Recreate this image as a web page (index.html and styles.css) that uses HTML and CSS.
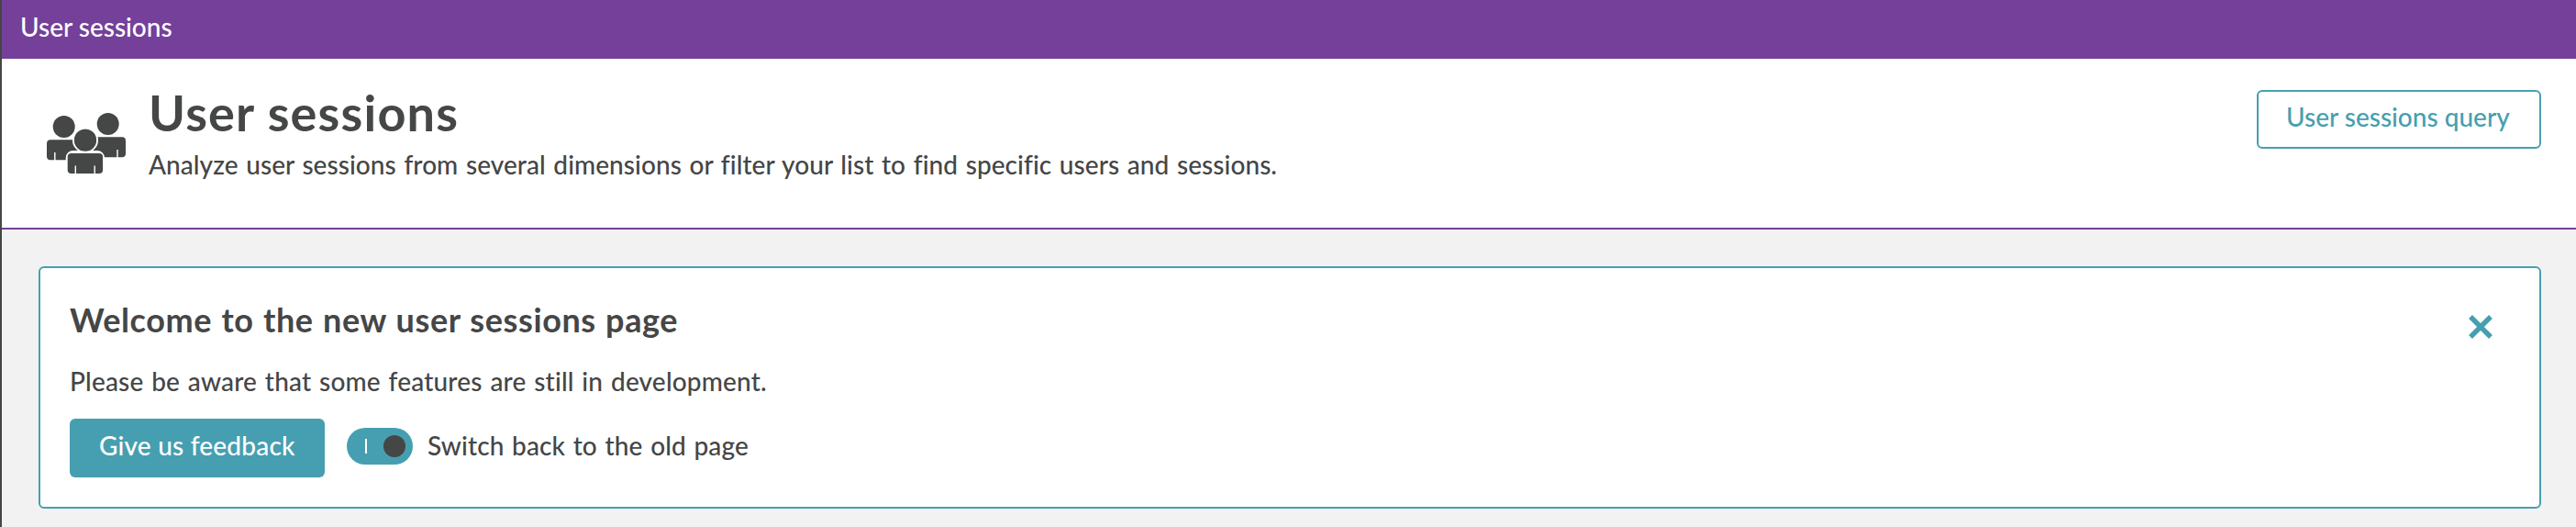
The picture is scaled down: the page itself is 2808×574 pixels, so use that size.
FILE: index.html
```html
<!DOCTYPE html>
<html lang="en">
<head>
    <meta charset="UTF-8">
    <meta name="viewport" content="width=device-width, initial-scale=1.0">
    <title>User sessions</title>
    <link rel="stylesheet" href="styles.css">
</head>
<body>
    <nav class="breadcrumb">User sessions</nav>
    <header class="header">
        <svg class="header-icon" viewBox="0 0 86 68" fill="#454646">
            <circle cx="18.7" cy="16" r="12"/>
            <circle cx="66.7" cy="13" r="12"/>
            <rect x="0" y="30.3" width="40" height="22" rx="4"/>
            <rect x="46" y="27.3" width="40" height="22" rx="4"/>
            <path d="M8.8 44v9M77 41v9" stroke="#fff" stroke-width="1.4"/>
            <circle cx="42" cy="30.7" r="13" stroke="#fff" stroke-width="2"/>
            <path d="M22.7 68V50a6 6 0 0 1 6-6H55a6 6 0 0 1 6 6v18z" fill="#fff" stroke="#fff" stroke-width="4"/>
            <circle cx="42" cy="30.7" r="12"/>
            <rect x="22.7" y="45" width="38.4" height="22" rx="4"/>
            <path d="M31.3 58.5V68M52.2 58.5V68" stroke="#fff" stroke-width="1.4"/>
        </svg>
        <div class="header-text">
            <h1>User sessions</h1>
            <p>Analyze user sessions from several dimensions or filter your list to find specific users and sessions.</p>
        </div>
        <a href="#" class="button query-button">User sessions query</a>
    </header>
    <main class="content">
        <section class="card">
            <div class="card-body">
                <h2>Welcome to the new user sessions page</h2>
                <p>Please be aware that some features are still in development.</p>
                <div class="actions">
                    <a href="#" class="button feedback-button">Give us feedback</a>
                    <span class="toggle"><span class="toggle-line"></span><span class="toggle-knob"></span></span>
                    <span class="toggle-label">Switch back to the old page</span>
                </div>
            </div>
            <svg class="close" viewBox="0 0 26 26" stroke="#469fb0" stroke-width="5.4">
                <path d="M2 2l22 22M24 2L2 24"/>
            </svg>
        </section>
    </main>
</body>
</html>
```
FILE: styles.css
```css
* {
    box-sizing: border-box;
}
body {
    margin: 0;
    min-height: 574px;
    font-family: 'Lato', sans-serif;
    font-size: 28px;
    font-weight: 500;
    color: #454646;
    background-color: #f2f2f2;
    border-left: 2px solid #454646;
}
h1, h2, p {
    margin: 0;
    white-space: nowrap;
}
.breadcrumb {
    height: 64px;
    padding-left: 20px;
    line-height: 58px;
    color: white;
    background-color: #74409a;
}
.header {
    display: flex;
    align-items: flex-start;
    height: 186px;
    padding: 29px 38px 0 49px;
    background-color: white;
    border-bottom: 2px solid #74409a;
}
.header-icon {
    width: 86px;
    height: 68px;
    margin-top: 29px;
}
.header-text {
    margin-left: 25px;
}
.header-text h1 {
    font-size: 54px;
    line-height: 60px;
    letter-spacing: 1.2px;
}
.header-text p {
    margin-top: 6px;
    line-height: 40px;
    letter-spacing: 0.06px;
    word-spacing: 1.5px;
}
.button {
    height: 64px;
    padding: 0 32px;
    line-height: 58px;
    border-radius: 6px;
    text-decoration: none;
    white-space: nowrap;
}
.query-button {
    width: 310px;
    margin: 5px 0 0 auto;
    padding: 0 30px;
    line-height: 54px;
    color: #469fb0;
    border: 2px solid #469fb0;
}
.content {
    padding: 40px 38px 20px 40px;
}
.card {
    display: flex;
    justify-content: space-between;
    height: 264px;
    padding: 34px 51px 0 32px;
    background-color: white;
    border: 2px solid #469fb0;
    border-radius: 6px;
}
.card h2 {
    font-size: 36px;
    line-height: 44px;
    letter-spacing: 0.6px;
    word-spacing: 1px;
}
.card p {
    margin-top: 25px;
    line-height: 40px;
    letter-spacing: 0.18px;
    word-spacing: 1.5px;
}
.actions {
    display: flex;
    align-items: flex-start;
    margin-top: 21px;
}
.feedback-button {
    width: 278px;
    letter-spacing: 0.2px;
    color: white;
    background-color: #469fb0;
}
.toggle {
    display: flex;
    align-items: center;
    justify-content: space-between;
    width: 72px;
    height: 40px;
    margin: 10px 0 0 24px;
    padding: 0 8px 0 20px;
    border-radius: 20px;
    background-color: #469fb0;
}
.toggle-line {
    width: 2px;
    height: 16px;
    background-color: white;
}
.toggle-knob {
    width: 24px;
    height: 24px;
    border-radius: 50%;
    background-color: #454646;
}
.toggle-label {
    margin-left: 16px;
    line-height: 58px;
    letter-spacing: 0.1px;
    word-spacing: 1.5px;
}
.close {
    width: 26px;
    height: 26px;
    margin-top: 17px;
}
```
